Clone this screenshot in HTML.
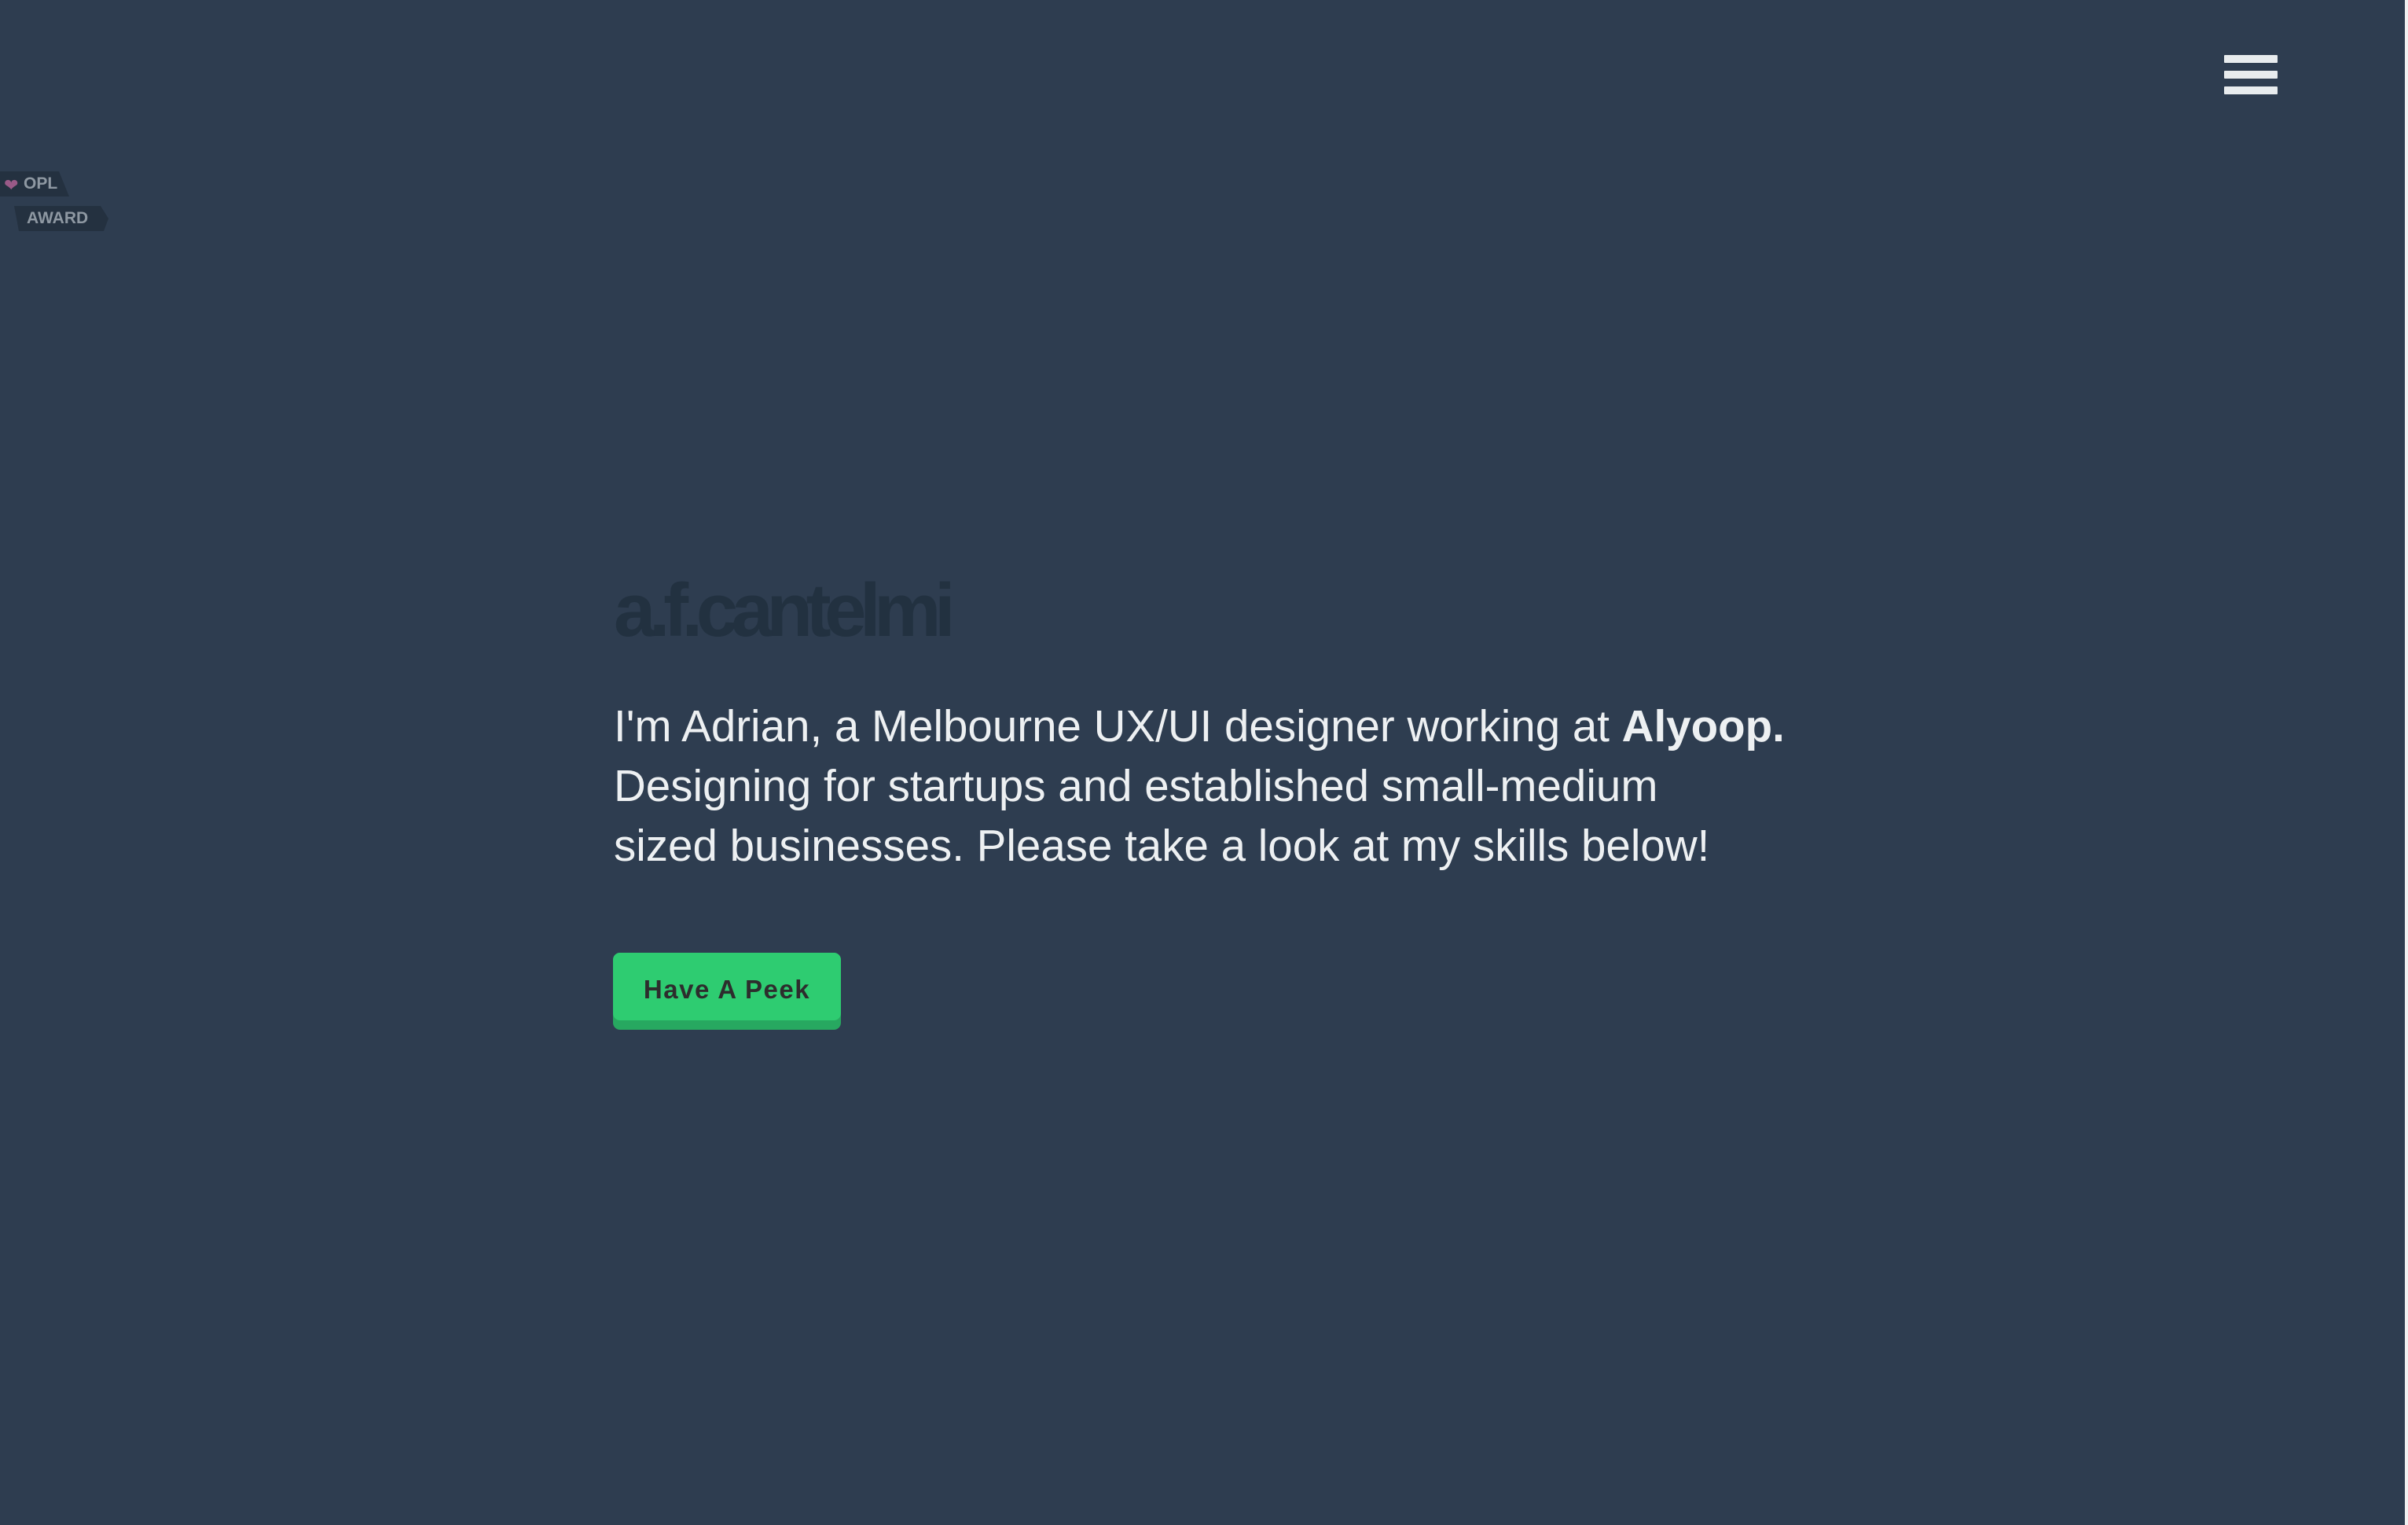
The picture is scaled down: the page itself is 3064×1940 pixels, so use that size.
<!DOCTYPE html>
<html><head><meta charset="utf-8"><style>
html,body{margin:0;padding:0;}
body{width:3064px;height:1940px;background:#2e3d50;position:relative;overflow:hidden;font-family:"Liberation Sans",sans-serif;}
.sb{position:absolute;left:3060px;top:0;width:4px;height:1940px;background:#f1f1f1;}
.hb{position:absolute;left:2830px;width:68px;height:10px;background:#e8ecee;border-radius:1px;}
.b1{position:absolute;left:0;top:218px;height:32px;background:#243140;clip-path:polygon(0 0,75px 0,88px 32px,0 32px);width:88px;}
.b2{position:absolute;left:18px;top:262px;width:120px;height:32px;background:#243140;clip-path:polygon(0 0,110px 0,120px 16px,114px 32px,6px 32px,0 0);}
.bt{position:absolute;color:#8e98a2;font-weight:bold;font-size:21px;}
h1{position:absolute;left:781px;top:722px;margin:0;font-size:96px;line-height:110px;font-weight:bold;letter-spacing:-8.5px;color:#223140;}
p{position:absolute;left:781px;top:886px;margin:0;font-size:56.5px;line-height:76px;color:#edf0f2;white-space:nowrap;}
.btn{position:absolute;left:780px;top:1212px;width:290px;height:98px;border-radius:9px;background:#27a860;}
.btn div{position:absolute;left:0;top:0;width:290px;height:86px;border-radius:9px;background:#2ecc71;text-align:center;line-height:94px;font-size:33px;font-weight:bold;color:#2d2d2d;letter-spacing:1.5px;}
</style></head><body>
<div class="sb"></div>
<div class="hb" style="top:70px"></div>
<div class="hb" style="top:90px"></div>
<div class="hb" style="top:110px"></div>
<div class="b1"></div>
<div class="b2"></div>
<div style="position:absolute;left:5px;top:223px;color:#9a5a88;font-size:22px;">&#10084;</div>
<div class="bt" style="left:30px;top:222px;">OPL</div>
<div class="bt" style="left:34px;top:266px;">AWARD</div>
<h1>a.f.cantelmi</h1>
<p>I'm Adrian, a Melbourne UX/UI designer working at <b>Alyoop.</b><br>Designing for startups and established small-medium<br>sized businesses. Please take a look at my skills below!</p>
<div class="btn"><div>Have A Peek</div></div>
</body></html>
